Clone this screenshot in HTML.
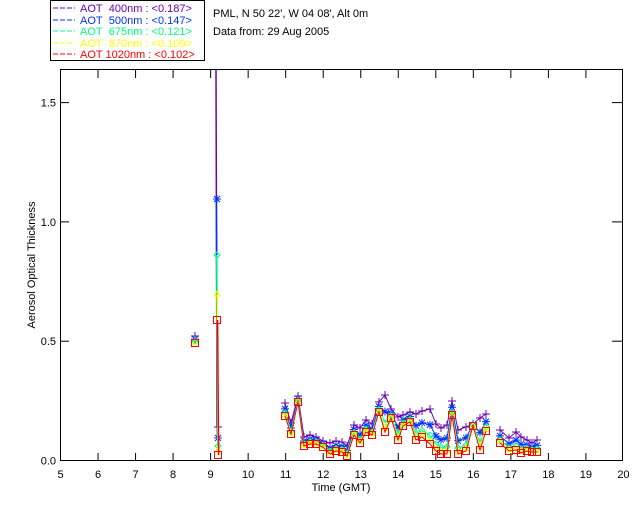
<!DOCTYPE html>
<html><head><meta charset="utf-8"><style>
html,body{margin:0;padding:0;background:#fff;width:640px;height:512px;overflow:hidden}
svg{display:block}
text{font-family:"Liberation Sans",sans-serif;font-size:11px;fill:#000}
</style></head><body>
<svg id="s" width="640" height="512" xmlns="http://www.w3.org/2000/svg">
<rect x="50.5" y="0.5" width="154" height="60" fill="none" stroke="#000"/>
<g font-size="11">
<line x1="53" y1="8" x2="75" y2="8" stroke="#6a00b0" stroke-dasharray="5,2"/><text x="80" y="12" style="fill:#6a00b0">AOT&#160;&#160;400nm : &lt;0.187&gt;</text>
<line x1="53" y1="20" x2="75" y2="20" stroke="#0030ff" stroke-dasharray="5,2"/><text x="80" y="24" style="fill:#0030ff">AOT&#160;&#160;500nm : &lt;0.147&gt;</text>
<line x1="53" y1="31" x2="75" y2="31" stroke="#00ff80" stroke-dasharray="5,2"/><text x="80" y="35" style="fill:#00ff80">AOT&#160;&#160;675nm : &lt;0.121&gt;</text>
<line x1="53" y1="43" x2="75" y2="43" stroke="#ffff00" stroke-dasharray="5,2"/><text x="80" y="47" style="fill:#ffff00">AOT&#160;&#160;870nm : &lt;0.109&gt;</text>
<line x1="53" y1="54" x2="75" y2="54" stroke="#ff0000" stroke-dasharray="5,2"/><text x="80" y="58" style="fill:#ff0000">AOT 1020nm : &lt;0.102&gt;</text>
</g>
<text x="213" y="17">PML, N 50 22', W 04 08', Alt 0m</text>
<text x="213" y="35">Data from: 29 Aug 2005</text>
<rect x="60.5" y="69.5" width="562" height="391" fill="none" stroke="#000"/>
<g id="ax" stroke="#000"></g>
<g id="lab"></g>
<text transform="translate(35,265) rotate(-90)" text-anchor="middle" font-size="10">Aerosol Optical Thickness</text>
<text x="341" y="491" text-anchor="middle" font-size="10">Time (GMT)</text>
<g id="data" fill="none" stroke-width="1"></g>
</svg>
<script>
(function(){
var ns="http://www.w3.org/2000/svg",ax=document.getElementById('ax'),lab=document.getElementById('lab'),dg=document.getElementById('data');
function el(p,t,a){var e=document.createElementNS(ns,t);for(var k in a)e.setAttribute(k,a[k]);p.appendChild(e);return e}
for(var h=5;h<=20;h++){var x=60.5+(h-5)*37.53;
 if(h>5&&h<20){el(ax,'line',{x1:x,y1:461,x2:x,y2:453});el(ax,'line',{x1:x,y1:70,x2:x,y2:78});}
 var t=el(lab,'text',{x:x,y:478,'text-anchor':'middle','font-size':10});t.textContent=h;}
[[0,'0.0'],[0.5,'0.5'],[1,'1.0'],[1.5,'1.5']].forEach(function(v){var y=460.5-v[0]*238.6;
 if(v[0]>0){el(ax,'line',{x1:61,y1:y,x2:69,y2:y});el(ax,'line',{x1:622,y1:y,x2:612,y2:y});}
 var t=el(lab,'text',{x:56,y:y+4,'text-anchor':'end','font-size':10});t.textContent=v[1];});
var X=[285,291,298,304,310,316,323,330,336,342,347,354,360,366,372,379,385,391,398,403,410,416,422,430,436,441,447,452,458,466,473,480,486,500,509,516,521,527,532,537];
var R=[416,434,402,446,444,444,447,454,451,452,456,435,443,432,435,412,432,418,440,426,422,440,437,444,451,454,454,415,454,451,426,450,431,443,451,450,453,451,452,452];
var P=[403,423,396,437,435,437,441,443,441,442,446,425,428,420,424,402,395,409,417,415,412,414,411,409,424,428,425,401,430,427,424,418,414,430,438,432,437,440,443,440];
var cols=['#6a00b0','#0030ff','#00ff80','#ffff00','#ff0000'],fr=[0,0.45,0.75,0.9,1];
function mk(g,c,k,x,y){
 if(k==0){el(g,'path',{d:'M'+(x-4)+' '+y+'h8M'+x+' '+(y-4)+'v8',stroke:c});}
 else if(k==1){el(g,'path',{d:'M'+(x-4)+' '+y+'h8M'+x+' '+(y-4)+'v8M'+(x-3)+' '+(y-3)+'l6 6M'+(x+3)+' '+(y-3)+'l-6 6',stroke:c});}
 else if(k==2){el(g,'path',{d:'M'+x+' '+(y-3)+'l3 3l-3 3l-3-3z',stroke:c});}
 else if(k==3){el(g,'path',{d:'M'+x+' '+(y-3)+'l3 5h-6z',stroke:c});}
 else {el(g,'rect',{x:x-3.5,y:y-3.5,width:7,height:7,stroke:c});}
}
var tops=[69,199,255,294,320],bots=[427,438,446,450,455];
for(var k=0;k<5;k++){var c=cols[k],pts=[];
 for(var i=0;i<X.length;i++){pts.push([X[i],P[i]+(R[i]-P[i])*fr[k]]);}
 var segs=[pts.slice(0,33),pts.slice(33)];
 segs.forEach(function(s){el(dg,'polyline',{points:s.map(function(p){return p.join(',')}).join(' '),stroke:c});});
 pts.forEach(function(p){mk(dg,c,k,p[0],p[1]);});
 mk(dg,c,k,195,336+7*fr[k]);
 var tp=tops[k],bt=bots[k];
 el(dg,'line',{x1:216+k*0.4,y1:tp,x2:217+k*0.4,y2:bt,stroke:c,'stroke-width':1.5});
 if(k>0)mk(dg,c,k,217,tp);
 mk(dg,c,k,218,bt);
}
})();
</script>
</body></html>
